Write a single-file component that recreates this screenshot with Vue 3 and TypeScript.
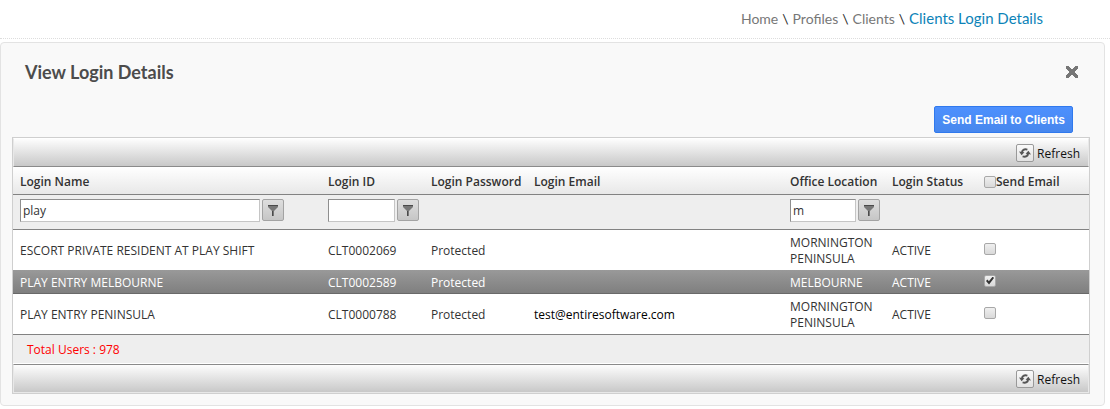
<script setup lang="ts">
import { computed, ref } from 'vue'

interface ClientLogin {
  name: string
  id: string
  password: string
  email: string
  office: string
  status: string
  send: boolean
}

const crumbs: string[] = ['Home', 'Profiles', 'Clients']
const nameFilter = ref('play')
const idFilter = ref('')
const officeFilter = ref('m')
const totalUsers = 978

const rows = ref<ClientLogin[]>([
  { name: 'ESCORT PRIVATE RESIDENT AT PLAY SHIFT', id: 'CLT0002069', password: 'Protected', email: '', office: 'MORNINGTON PENINSULA', status: 'ACTIVE', send: false },
  { name: 'PLAY ENTRY MELBOURNE', id: 'CLT0002589', password: 'Protected', email: '', office: 'MELBOURNE', status: 'ACTIVE', send: true },
  { name: 'PLAY ENTRY PENINSULA', id: 'CLT0000788', password: 'Protected', email: 'test@entiresoftware.com', office: 'MORNINGTON PENINSULA', status: 'ACTIVE', send: false },
])

const allSelected = computed<boolean>({
  get: () => rows.value.every((r) => r.send),
  set: (value) => rows.value.forEach((r) => (r.send = value)),
})
</script>

<template>
  <div class="page">
    <nav class="crumbs" aria-label="Breadcrumb">
      <template v-for="c in crumbs" :key="c">
        <a href="#">{{ c }}</a><span class="sep">\</span>
      </template>
      <a href="#" class="current" aria-current="page">Clients Login Details</a>
    </nav>

    <main class="panel">
      <header class="panel-head">
        <h1>View Login Details</h1>
        <button type="button" class="close" aria-label="Close">
          <svg width="12" height="12" viewBox="0 0 12 12" aria-hidden="true">
            <path d="M0 0h3v1h1v1h1v1h2v-1h1v-1h1v-1h3v3h-1v1h-1v1h-1v2h1v1h1v1h1v3h-3v-1h-1v-1h-1v-1h-2v1h-1v1h-1v1h-3v-3h1v-1h1v-1h1v-2h-1v-1h-1v-1h-1z" fill="#777" />
          </svg>
        </button>
      </header>

      <div class="actions">
        <button type="button" class="send">Send Email to Clients</button>
      </div>

      <section class="grid">
        <div class="bar">
          <button type="button" class="refresh">
            <span class="refresh-icon">
              <svg width="12" height="12" viewBox="0 0 12 12" aria-hidden="true">
                <path d="M3 5.5C3 3 5 1.8 8.4 2.6M9 6.5C9 9 7 10.2 3.6 9.4" fill="none" stroke="#555" stroke-width="2" />
                <path d="M0 4.6l5.4.6-2.8 3zM12 7.4l-5.4-.6 2.8-3z" fill="#555" />
              </svg>
            </span>
            <span>Refresh</span>
          </button>
        </div>

        <table>
          <colgroup>
            <col class="c-name" /><col class="c-id" /><col class="c-id" /><col />
            <col class="c-office" /><col class="c-status" /><col class="c-send" />
          </colgroup>
          <thead>
            <tr class="titles">
              <th scope="col">Login Name</th>
              <th scope="col">Login ID</th>
              <th scope="col">Login Password</th>
              <th scope="col">Login Email</th>
              <th scope="col">Office Location</th>
              <th scope="col">Login Status</th>
              <th scope="col"><label class="all"><input v-model="allSelected" type="checkbox" />Send Email</label></th>
            </tr>
            <tr class="filters">
              <td>
                <div class="filter">
                  <input v-model="nameFilter" class="wide" type="text" aria-label="Filter login name" />
                  <button type="button" aria-label="Login name filter options">
                    <svg width="10" height="11" viewBox="0 0 10 11" aria-hidden="true"><path d="M0 0h10v2l-4 4v5H4V6L0 2z" fill="#777" /><path d="M0 0h10v1H0zM4 6h1v5H4z" fill="#4a4a4a" /></svg>
                  </button>
                </div>
              </td>
              <td>
                <div class="filter">
                  <input v-model="idFilter" type="text" aria-label="Filter login ID" />
                  <button type="button" aria-label="Login ID filter options">
                    <svg width="10" height="11" viewBox="0 0 10 11" aria-hidden="true"><path d="M0 0h10v2l-4 4v5H4V6L0 2z" fill="#777" /><path d="M0 0h10v1H0zM4 6h1v5H4z" fill="#4a4a4a" /></svg>
                  </button>
                </div>
              </td>
              <td></td>
              <td></td>
              <td>
                <div class="filter">
                  <input v-model="officeFilter" class="narrow" type="text" aria-label="Filter office location" />
                  <button type="button" aria-label="Office location filter options">
                    <svg width="10" height="11" viewBox="0 0 10 11" aria-hidden="true"><path d="M0 0h10v2l-4 4v5H4V6L0 2z" fill="#777" /><path d="M0 0h10v1H0zM4 6h1v5H4z" fill="#4a4a4a" /></svg>
                  </button>
                </div>
              </td>
              <td></td>
              <td></td>
            </tr>
          </thead>
          <tbody>
            <tr v-for="r in rows" :key="r.id" :class="{ selected: r.send }">
              <td>{{ r.name }}</td>
              <td>{{ r.id }}</td>
              <td>{{ r.password }}</td>
              <td class="email">{{ r.email }}</td>
              <td>{{ r.office }}</td>
              <td>{{ r.status }}</td>
              <td class="tick"><input v-model="r.send" type="checkbox" :aria-label="`Send email to ${r.name}`" /></td>
            </tr>
          </tbody>
          <tfoot>
            <tr>
              <td colspan="7">Total Users : {{ totalUsers }}</td>
            </tr>
          </tfoot>
        </table>

        <div class="bar bottom">
          <button type="button" class="refresh">
            <span class="refresh-icon">
              <svg width="12" height="12" viewBox="0 0 12 12" aria-hidden="true">
                <path d="M3 5.5C3 3 5 1.8 8.4 2.6M9 6.5C9 9 7 10.2 3.6 9.4" fill="none" stroke="#555" stroke-width="2" />
                <path d="M0 4.6l5.4.6-2.8 3zM12 7.4l-5.4-.6 2.8-3z" fill="#555" />
              </svg>
            </span>
            <span>Refresh</span>
          </button>
        </div>
      </section>
    </main>
  </div>
</template>

<style>
body {
  background: #fff;
}
</style>

<style scoped>
.page,
.page * {
  box-sizing: border-box;
}

.page {
  font-family: "Segoe UI", "Open Sans", sans-serif;
  font-size: 12px;
  line-height: 16px;
  color: #333;
}

button {
  font: inherit;
  color: inherit;
  padding: 0;
  margin: 0;
  cursor: pointer;
}

.crumbs {
  display: flex;
  justify-content: flex-end;
  align-items: baseline;
  gap: 4px;
  padding: 8px 67px 9px 0;
  border-bottom: 1px dotted #ddd;
  font-family: "Gill Sans MT", Lato, sans-serif;
  font-size: 14px;
  line-height: 20px;
}

.crumbs a {
  color: #777;
  text-decoration: none;
}

.crumbs a.current {
  color: #0c83b8;
  font-size: 15px;
}

.sep {
  color: #222;
}

.panel {
  margin: 3px 5px 0 0;
  padding: 19px 14px 11px 11px;
  border: 1px solid #e3e3e3;
  border-radius: 4px;
  background: #f9f9f9;
}

.panel-head {
  display: flex;
  justify-content: space-between;
  align-items: center;
  padding: 0 12px 0 13px;
}

h1 {
  margin: 0;
  font-family: "Gill Sans MT", Lato, sans-serif;
  font-size: 18px;
  line-height: 20px;
  font-weight: 700;
  color: #4c4c4c;
}

.close {
  display: flex;
  border: 0;
  background: none;
}

.actions {
  display: flex;
  justify-content: flex-end;
  padding: 24px 17px 4px 0;
}

.send {
  height: 27px;
  padding: 0 7px;
  border: 1px solid #3079ed;
  border-radius: 2px;
  background: linear-gradient(#4d90fe, #4787ed);
  color: #fff;
  font-family: "Liberation Sans", Arial, sans-serif;
  font-size: 12px;
  font-weight: 700;
}

.grid {
  border: 1px solid #cfcfcf;
  background: #fff;
}

.bar {
  display: flex;
  justify-content: flex-end;
  align-items: center;
  height: 29px;
  padding: 0 8px 0 0;
  border: 1px solid #e8e8e8;
  border-top-color: #fff;
  border-bottom-color: #8a8a8a;
  background: linear-gradient(#fdfdfd, #c8c8c8);
}

.bar.bottom {
  border-top-color: #8a8a8a;
  border-bottom-color: #e8e8e8;
  margin-top: 1px;
}

.refresh {
  display: flex;
  align-items: flex-end;
  gap: 3px;
  border: 0;
  background: none;
  color: #111;
}

.refresh-icon {
  display: flex;
  align-items: center;
  justify-content: center;
  width: 18px;
  height: 18px;
  border: 1px solid #999;
  border-radius: 2px;
  background: linear-gradient(#fafafa, #e2e2e2);
}

table {
  width: 100%;
  table-layout: fixed;
  border-collapse: separate;
  border-spacing: 0;
}

.c-name {
  width: 308px;
}

.c-id {
  width: 103px;
}

.c-office {
  width: 102px;
}

.c-status {
  width: 92px;
}

.c-send {
  width: 112px;
}

th,
td {
  padding: 5px 7px 3px;
  text-align: left;
  font-weight: 400;
}

.titles {
  background: linear-gradient(#fff, #e7e7e7);
}

.titles th {
  height: 28px;
  padding: 5px 7px 3px;
  border-bottom: 1px solid #828282;
  font-weight: 600;
  white-space: nowrap;
}

.all {
  display: flex;
  align-items: center;
}

.filters td {
  height: 35px;
  padding: 4px 7px 7px;
  border-bottom: 1px solid #828282;
  background: #eee;
}

.filter {
  display: flex;
  gap: 2px;
}

.filter input {
  width: 67px;
  height: 23px;
  padding: 0 2px;
  border: 1px solid #c5c5c5;
  border-top-color: #8e8e8e;
  border-left-color: #8e8e8e;
  border-radius: 0;
  background: #fff;
  color: #333;
  font: inherit;
}

.filter input.wide {
  width: 240px;
}

.filter input.narrow {
  width: 66px;
}

.filter button {
  display: flex;
  align-items: center;
  justify-content: center;
  flex: none;
  width: 22px;
  height: 22px;
  border: 1px solid #a3a3a3;
  border-radius: 2px;
  background: linear-gradient(#dedede, #c6c6c6);
}

.email {
  color: #000;
}

.selected td {
  padding-bottom: 2px;
  border-bottom: 1px solid #696969;
  color: #fff;
}

.selected {
  background: linear-gradient(#999, #7e7e7e);
}

tr td.tick {
  padding-top: 3px;
  padding-bottom: 5px;
}

.tick input {
  display: block;
}

input[type="checkbox"] {
  appearance: none;
  position: relative;
  flex: none;
  width: 12px;
  height: 12px;
  margin: 0;
  border: 1px solid #a8a8a8;
  border-radius: 2px;
  background: linear-gradient(#efefef, #d9d9d9);
}

input[type="checkbox"]:checked::after {
  content: "";
  position: absolute;
  inset: 1px;
  background: #333;
  clip-path: polygon(0 55%, 18% 38%, 36% 58%, 84% 0, 100% 18%, 38% 100%);
}

tfoot td {
  height: 29px;
  padding: 6px 14px 4px;
  border-top: 1px solid #828282;
  background: #eee;
  color: #f00;
}
</style>
